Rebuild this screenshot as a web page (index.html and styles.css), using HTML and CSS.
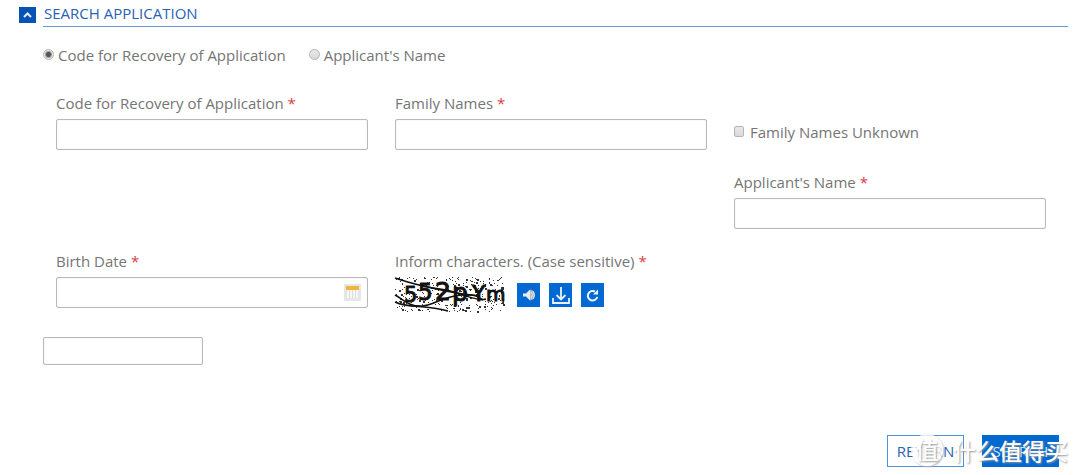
FILE: index.html
```html
<!DOCTYPE html>
<html lang="en">
<head>
<meta charset="utf-8">
<title>Search Application</title>
<link rel="stylesheet" href="styles.css">
</head>
<body>
<main class="page">
  <header class="section-head">
    <button class="collapse" type="button" aria-label="Collapse section">
      <svg width="17" height="16" viewBox="0 0 17 16"><path d="M5 10l3.500-3.500L12 10" fill="none" stroke="#e3edf8" stroke-width="2"/></svg>
    </button>
    <h1 class="title">SEARCH APPLICATION</h1>
  </header>
  <form class="form">
    <div class="modes">
      <label class="choice"><input class="radio" type="radio" name="mode" checked>Code for Recovery of Application</label>
      <label class="choice"><input class="radio" type="radio" name="mode">Applicant's Name</label>
    </div>
    <div class="grid">
      <div class="field">
        <label for="code">Code for Recovery of Application <span class="req">*</span></label>
        <input class="box" id="code" type="text">
      </div>
      <div class="field">
        <label for="family">Family Names <span class="req">*</span></label>
        <input class="box" id="family" type="text">
      </div>
      <label class="choice unknown"><input class="check" type="checkbox">Family Names Unknown</label>
      <div class="field last-column">
        <label for="name">Applicant's Name <span class="req">*</span></label>
        <input class="box" id="name" type="text">
      </div>
      <div class="field">
        <label for="birth">Birth Date <span class="req">*</span></label>
        <div class="date">
          <input class="box" id="birth" type="text">
          <button class="calendar" type="button" aria-label="Choose date">
            <svg width="17" height="17" viewBox="0 0 17 17"><rect width="17" height="17" rx="1" fill="#e5e6e8"/><path d="M3 5h11v9H3z" fill="#f7f7f5"/><path d="M5.500 6v8M8.500 6v8M11.500 6v8" stroke="#dddddb"/><path d="M2 2h13v4H2z" fill="#efb63f"/></svg>
          </button>
        </div>
      </div>
      <div class="field">
        <label for="captcha">Inform characters. (Case sensitive) <span class="req">*</span></label>
        <div class="captcha">
          <svg class="captcha-image" width="110" height="36" viewBox="0 0 110 36" role="img" aria-label="Captcha">
            <path id="noise" fill="#333"/>
            <g class="captcha-text">
              <text x="9" y="25" font-size="21">5</text>
              <text x="23" y="23" font-size="23">5</text>
              <text x="40" y="23" font-size="25">2</text>
              <text x="57" y="24" font-size="25">p</text>
              <text x="77" y="24" font-size="22">Y</text>
              <text x="91" y="24" font-size="20">m</text>
            </g>
            <g fill="none" stroke="#111" stroke-width="1.500">
              <path d="M0 1C18 7 28 10 45 12S68 20 88 23"/>
              <path d="M0 18C8 22 14 30 27 29S45 20 67 18S82 25 91 22"/>
              <path d="M0 25C14 32 29 27 53 34"/>
              <path d="M25 8C43 13 65 17 84 19"/>
            </g>
          </svg>
          <button class="tool" type="button" aria-label="Play audio">
            <svg width="23" height="24" viewBox="0 0 23 24"><path d="M6 10.500h3l4-4v11l-4-4H6z" fill="#e8edf5"/><path d="M13 6.500q5 1 5 5.500t-5 5.500z" fill="#a9b7ca"/><path d="M14 9q3 3 0 6M16 8q3 4 0 8" fill="none" stroke="#e7e7e1"/></svg>
          </button>
          <button class="tool" type="button" aria-label="Download audio">
            <svg width="23" height="24" viewBox="0 0 23 24"><path d="M12 4v12M7.500 12l4.500 4.500 4.500-4.500M4 15v5h16v-5" fill="none" stroke="#e9f2fd" stroke-width="1.800"/></svg>
          </button>
          <button class="tool" type="button" aria-label="New characters">
            <svg width="23" height="24" viewBox="0 0 23 24"><path d="M14 8.500A4.800 4.800 0 1 0 16.300 14" fill="none" stroke="#f0f6fe" stroke-width="2"/><path d="M17 6.500v5h-5z" fill="#f0f6fe"/></svg>
          </button>
        </div>
      </div>
    </div>
    <input class="box answer" id="captcha" type="text">
    <div class="actions">
      <button class="button" type="button">RETURN</button>
      <button class="button primary" type="submit">SEARCH</button>
      <div class="watermark"><span class="seal">值</span><span>什么值得买</span></div>
    </div>
  </form>
</main>
<script src="noise.js"></script>
</body>
</html>
```

FILE: styles.css
```css
* { box-sizing: border-box; }

body {
  margin: 0;
  background: #fff;
  color: #757575;
  font: 15px/20px "Open Sans", "Noto Sans", sans-serif;
}

button { padding: 0; font: inherit; cursor: pointer; }
svg { display: block; overflow: visible; }

.page { padding: 2px 12px 8px 19px; }

.section-head { display: flex; align-items: center; gap: 7px; }

.collapse { border: 0; background: #0753b5; }

.title {
  flex: 1;
  margin: 0;
  padding: 0 1px 1px;
  border-bottom: 1px solid #6699d8;
  color: #2862b5;
  font-size: 15px;
  font-weight: 400;
  line-height: 23px;
}

.form { padding-left: 24px; }

.modes { display: flex; gap: 23px; padding-top: 18px; }

.choice { display: flex; align-items: center; gap: 4px; }

.radio, .check {
  appearance: none;
  width: 11px;
  height: 11px;
  margin: 0 0 2px;
  border: 1px solid #b5b5b5;
  background: linear-gradient(#e9e9e9, #d9d9d9);
}

.radio { border-radius: 50%; }
.radio:checked { background: radial-gradient(circle, #555 0 2px, #e5e5e5 4px); }
.check { width: 10px; border-radius: 2px; }

.grid {
  display: grid;
  grid-template-columns: repeat(3, 1fr);
  gap: 22px 27px;
  padding: 28px 22px 0 13px;
}

.field { display: flex; flex-direction: column; gap: 6px; min-width: 0; }
.last-column { grid-column: 3; }
.unknown { gap: 6px; align-self: end; padding-bottom: 8px; }
.req { color: #d83b46; }

.box {
  width: 100%;
  height: 32px;
  padding: 4px 8px;
  border: 1px solid #b9b9b9;
  border-radius: 2px;
  background: #fff;
  box-shadow: inset 0 0 1px #c5c5c5;
  font: inherit;
}

.field .box { height: 31px; }

.date { position: relative; }
.calendar { position: absolute; top: 7px; right: 7px; border: 0; background: none; }

.captcha { display: flex; align-items: center; gap: 9px; }
.captcha-image { margin-right: 3px; }
.captcha-text { fill: #111; stroke: #111; font-family: "DejaVu Sans", sans-serif; }
.tool { border: 0; background: #0268d2; }

.answer { display: block; width: 160px; height: 28px; margin-top: 24px; }

.actions {
  position: relative;
  display: flex;
  justify-content: flex-end;
  gap: 18px;
  padding: 70px 9px 0 0;
}

.button {
  width: 77px;
  height: 32px;
  border: 1px solid #4b93df;
  background: #fff;
  color: #2865b3;
}

.primary { border-color: #0268d2; background: #0268d2; color: #d9e9fb; }

.watermark {
  position: absolute;
  right: 0;
  bottom: 0;
  display: flex;
  align-items: center;
  gap: 10px;
  color: #fff;
  font: 500 23px/34px "Noto Sans CJK SC", sans-serif;
  text-shadow: 1px 1px 2px #999;
  pointer-events: none;
}

.seal {
  width: 32px;
  height: 32px;
  border-radius: 50%;
  background: #ffffffcc;
  box-shadow: 1px 1px 2px #bbb;
  line-height: 30px;
  text-align: center;
}
```

FILE: noise.js
```js
let seed = 5527;
const next = () => (seed = (seed * 16807) % 2147483647) / 2147483647;
let dots = "";
for (let i = 0; i < 300; i++) {
  const x = Math.floor(next() * 109);
  const y = Math.floor(next() * 35);
  const size = next() > 0.8 ? 2 : 1;
  dots += `M${x} ${y}h${size}v${size}h-${size}z`;
}
document.getElementById("noise").setAttribute("d", dots);
```
